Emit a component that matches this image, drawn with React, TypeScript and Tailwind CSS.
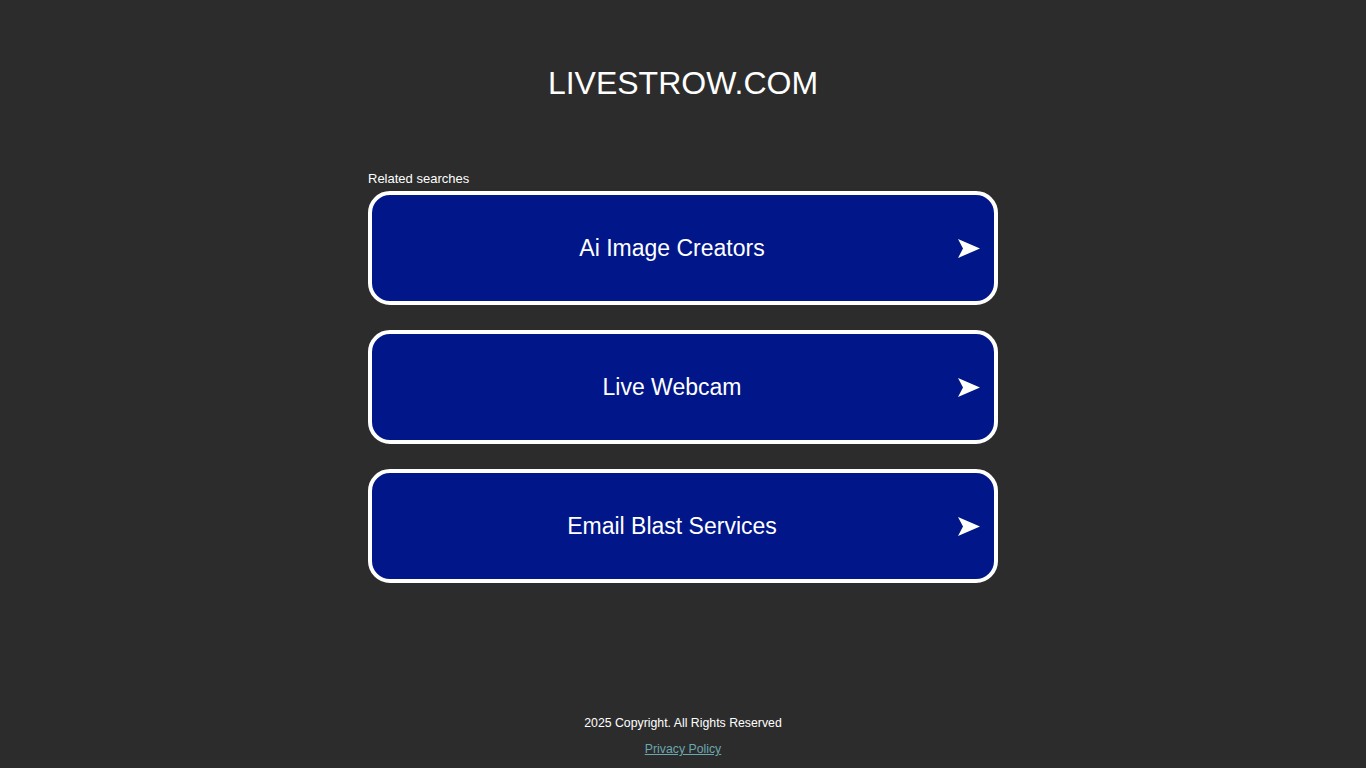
const searches = ["Ai Image Creators", "Live Webcam", "Email Blast Services"];

function Arrow() {
  return (
    <svg width="22" height="19" viewBox="0 0 22 19" className="shrink-0">
      <path d="M0 0 L22 9.5 L0 19 L5 9.5 Z" fill="#ffffff" />
    </svg>
  );
}

export default function App() {
  return (
    <div className="min-h-[768px] bg-[#2c2c2c] flex flex-col items-center font-['Liberation_Sans',Arial,sans-serif] text-white">
      <h1 className="mt-[64px] text-[32px] leading-[38px]">LIVESTROW.COM</h1>

      <div className="mt-[69px] w-[630px]">
        <div className="text-[13px] leading-[16px] mb-[4px]">Related searches</div>
        <div className="flex flex-col gap-[25px]">
          {searches.map((s) => (
            <a
              key={s}
              href="#"
              className="h-[114px] rounded-[22px] border-4 border-white bg-[#011689] flex items-center pl-[14px] pr-[14px]"
            >
              <span className="flex-1 text-center text-[23px] leading-[28px]">{s}</span>
              <Arrow />
            </a>
          ))}
        </div>
      </div>

      <div className="mt-auto pb-[12px] flex flex-col items-center text-[12.3px]">
        <div className="leading-[14px]">2025 Copyright. All Rights Reserved</div>
        <a href="#" className="mt-[12px] leading-[14px] text-[#6ba7ae] underline">Privacy Policy</a>
      </div>
    </div>
  );
}
